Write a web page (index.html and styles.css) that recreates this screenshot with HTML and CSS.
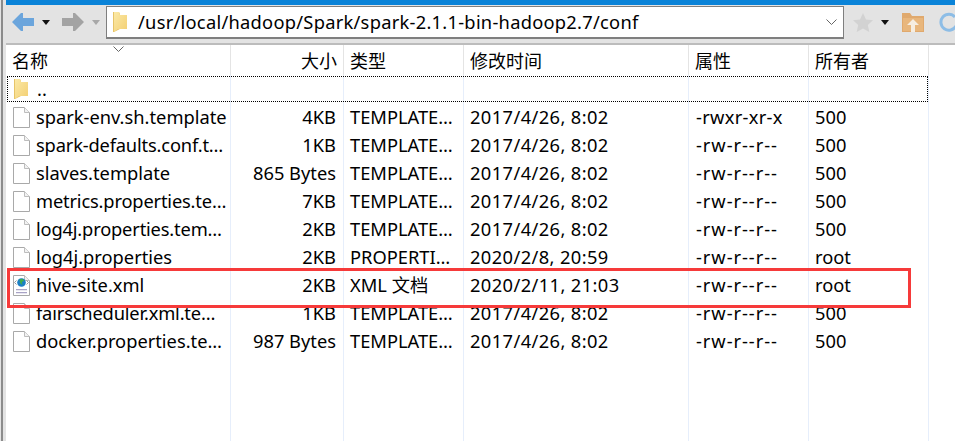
FILE: index.html
```html
<!DOCTYPE html>
<html lang="zh">
<head>
<meta charset="utf-8">
<title>conf</title>
<link rel="stylesheet" href="styles.css">
</head>
<body>
<svg class="defs" width="0" height="0" aria-hidden="true">
  <defs>
    <linearGradient id="fold" x1="0" y1="0" x2="1" y2="1">
      <stop offset="0" stop-color="#fbe9a6"/>
      <stop offset="1" stop-color="#f3cf73"/>
    </linearGradient>
    <symbol id="folder" viewBox="0 0 14 21">
      <path d="M0 1h6l1 2v15l-6 3H0z" fill="#e7c468"/>
      <path d="M1 1h5l1 3h7v14H5l-4 3z" fill="url(#fold)"/>
    </symbol>
    <symbol id="file" viewBox="0 0 17 21">
      <path d="M.5.5h11l5 5v15H.5z" fill="#fff" stroke="#a9a9a9"/>
      <path d="M11.500.5v5h5" fill="#f2f2f2" stroke="#bdbdbd"/>
    </symbol>
    <symbol id="arrow" viewBox="0 0 22 18">
      <path d="M9 0h2v5h11v8H11v5H9L0 9z"/>
    </symbol>
    <symbol id="tri" viewBox="0 0 8 5">
      <path d="M0 0h8L4 5z"/>
    </symbol>
    <symbol id="chev" viewBox="0 0 11 6">
      <path d="M.5.5l5 5 5-5" fill="none" stroke="#666" stroke-width="1"/>
    </symbol>
  </defs>
</svg>
<div class="edge"></div>
<main class="window">
  <div class="accent"></div>
  <div class="toolbar">
    <svg class="ico-arrow back"><use href="#arrow"/></svg>
    <svg class="ico-tri dark"><use href="#tri"/></svg>
    <svg class="ico-arrow forward"><use href="#arrow"/></svg>
    <svg class="ico-tri pale"><use href="#tri"/></svg>
    <div class="address">
      <svg class="ico-folder"><use href="#folder"/></svg>
      <span class="path">/usr/local/hadoop/Spark/spark-2.1.1-bin-hadoop2.7/conf</span>
      <svg class="ico-chev"><use href="#chev"/></svg>
    </div>
    <svg class="star" viewBox="0 0 20 19"><path d="M10 0l3 6.500 7 .8-5.200 4.700 1.500 7L10 15.500 3.700 19l1.500-7L0 7.300l7-.8z" fill="#d2d2d2"/></svg>
    <svg class="ico-tri dark star-tri"><use href="#tri"/></svg>
    <svg class="up" viewBox="0 0 22 19">
      <path d="M0 0h8l2 3h12v16H0z" fill="#e0a96d"/>
      <path d="M1 5h20v13H1z" fill="#e8b67c"/>
      <path d="M11 6l6 6h-4v7H9v-7H5z" fill="#f6ede0"/>
    </svg>
    <svg class="refresh" viewBox="0 0 22 20">
      <path d="M17 5A8 8 0 1 0 18 14" fill="none" stroke="#8dbde6" stroke-width="3"/>
    </svg>
  </div>
  <div class="head">
    <div class="hcell">名称</div>
    <div class="hcell right">大小</div>
    <div class="hcell">类型</div>
    <div class="hcell">修改时间</div>
    <div class="hcell">属性</div>
    <div class="hcell">所有者</div>
    <svg class="sort"><use href="#chev"/></svg>
  </div>
  <div class="list">
    <div class="row focus">
      <div class="cell name"><svg class="ico-folder"><use href="#folder"/></svg><span>..</span></div>
      <div class="cell"></div><div class="cell"></div><div class="cell"></div><div class="cell"></div><div class="cell"></div>
    </div>
    <div class="row">
      <div class="cell name"><svg class="ico-file"><use href="#file"/></svg><span>spark-env.sh.template</span></div>
      <div class="cell size">4KB</div><div class="cell">TEMPLATE…</div><div class="cell date">2017/4/26, 8:02</div><div class="cell perm-x">-rwxr-xr-x</div><div class="cell">500</div>
    </div>
    <div class="row">
      <div class="cell name"><svg class="ico-file"><use href="#file"/></svg><span class="tight">spark-defaults.conf.t…</span></div>
      <div class="cell size">1KB</div><div class="cell">TEMPLATE…</div><div class="cell date">2017/4/26, 8:02</div><div class="cell perm">-rw-r--r--</div><div class="cell">500</div>
    </div>
    <div class="row">
      <div class="cell name"><svg class="ico-file"><use href="#file"/></svg><span>slaves.template</span></div>
      <div class="cell size">865 Bytes</div><div class="cell">TEMPLATE…</div><div class="cell date">2017/4/26, 8:02</div><div class="cell perm">-rw-r--r--</div><div class="cell">500</div>
    </div>
    <div class="row">
      <div class="cell name"><svg class="ico-file"><use href="#file"/></svg><span class="tight">metrics.properties.te…</span></div>
      <div class="cell size">7KB</div><div class="cell">TEMPLATE…</div><div class="cell date">2017/4/26, 8:02</div><div class="cell perm">-rw-r--r--</div><div class="cell">500</div>
    </div>
    <div class="row">
      <div class="cell name"><svg class="ico-file"><use href="#file"/></svg><span class="tight">log4j.properties.tem…</span></div>
      <div class="cell size">2KB</div><div class="cell">TEMPLATE…</div><div class="cell date">2017/4/26, 8:02</div><div class="cell perm">-rw-r--r--</div><div class="cell">500</div>
    </div>
    <div class="row">
      <div class="cell name"><svg class="ico-file"><use href="#file"/></svg><span>log4j.properties</span></div>
      <div class="cell size">2KB</div><div class="cell">PROPERTI…</div><div class="cell date">2020/2/8, 20:59</div><div class="cell perm">-rw-r--r--</div><div class="cell">root</div>
    </div>
    <div class="row">
      <div class="cell name">
        <svg class="ico-file" viewBox="0 0 17 21">
          <path d="M.5.5h11l5 5v15H.5z" fill="#fff" stroke="#a9a9a9"/>
          <path d="M11.500.5v5h5" fill="#f2f2f2" stroke="#bdbdbd"/>
          <circle cx="8.500" cy="7.500" r="4.300" fill="#1c7fc4"/>
          <path d="M6.500 4.500l3-.8 1.500 2.300-2.300 1 .8 3-2.300-1.800z" fill="#3fae49"/>
          <path d="M3.500 5.500L1.500 7.500l2 2M13.500 5.500l2 2-2 2" fill="none" stroke="#9a9a9a"/>
          <path d="M3 14h11v1.200H3zM3 17h11v1.200H3z" fill="#a9a3c6"/>
        </svg>
        <span>hive-site.xml</span>
      </div>
      <div class="cell size">2KB</div><div class="cell">XML 文档</div><div class="cell date">2020/2/11, 21:03</div><div class="cell perm">-rw-r--r--</div><div class="cell">root</div>
    </div>
    <div class="row">
      <div class="cell name"><svg class="ico-file"><use href="#file"/></svg><span class="tight">fairscheduler.xml.te…</span></div>
      <div class="cell size">1KB</div><div class="cell">TEMPLATE…</div><div class="cell date">2017/4/26, 8:02</div><div class="cell perm">-rw-r--r--</div><div class="cell">500</div>
    </div>
    <div class="row">
      <div class="cell name"><svg class="ico-file"><use href="#file"/></svg><span>docker.properties.te…</span></div>
      <div class="cell size">987 Bytes</div><div class="cell">TEMPLATE…</div><div class="cell date">2017/4/26, 8:02</div><div class="cell perm">-rw-r--r--</div><div class="cell">500</div>
    </div>
  </div>
  <div class="callout"></div>
</main>
</body>
</html>
```
FILE: styles.css
```css
* { box-sizing: border-box; }
html, body { margin: 0; height: 100%; }
body {
  display: flex;
  width: 955px;
  height: 441px;
  overflow: hidden;
  background: #e3e3e3;
  font-family: "Noto Sans", "Noto Sans CJK SC", sans-serif;
  font-size: 18.300px;
  color: #000;
}
.defs { position: absolute; }
.edge {
  flex: none;
  width: 2px;
  margin: 0 3px 0 1px;
  background: #8b8b8b;
}
.window {
  position: relative;
  flex: 1;
  min-width: 0;
  display: flex;
  flex-direction: column;
  background: #fff;
}
.accent { flex: none; height: 5px; background: #0a83d8; }
.toolbar {
  flex: none;
  height: 40px;
  display: flex;
  align-items: center;
  overflow: hidden;
  padding: 0 0 4px 6px;
  background: #e3e3e3;
  border-bottom: 2px solid #bcbcbc;
}
.ico-arrow { flex: none; width: 22px; height: 18px; }
.back { fill: #6ba5dc; }
.forward { fill: #a3a3a3; transform: scaleX(-1); margin-left: 12px; }
.ico-tri { flex: none; width: 8px; height: 5px; margin-left: 8px; }
.dark { fill: #111; }
.pale { fill: #a8a8a8; }
.address {
  flex: none;
  width: 738px;
  height: 33px;
  margin-left: 6px;
  display: flex;
  align-items: center;
  padding: 0 6px 0 6px;
  background: #fff;
  border: 1px solid #7f7f7f;
  border-width: 1px 1px 2px;
}
.address .ico-folder { margin-right: 11px; }
.path { flex: 1; white-space: nowrap; letter-spacing: .27px; }
.ico-folder { flex: none; width: 14px; height: 21px; }
.ico-chev { flex: none; width: 11px; height: 6px; }
.star { flex: none; width: 20px; height: 19px; margin-left: 9px; }
.star-tri { margin-left: 8px; }
.up { flex: none; width: 22px; height: 19px; margin-left: 13px; }
.refresh { flex: none; width: 22px; height: 20px; margin-left: 14px; }
.head, .row {
  display: grid;
  grid-template-columns: 225px 113px 120px 225px 120px 120px;
  align-items: center;
  width: 923px;
}
.head { position: relative; flex: none; height: 30px; }
.hcell {
  height: 100%;
  display: flex;
  align-items: center;
  padding: 0 6px;
  border-right: 1px solid #e4e4e4;
  white-space: nowrap;
  font-size: 18px;
}
.right { justify-content: flex-end; }
.sort { position: absolute; left: 107px; top: 1px; width: 11px; height: 6px; }
.list {
  flex: 1;
  background-image:
    linear-gradient(#e6eefb, #e6eefb), linear-gradient(#e6eefb, #e6eefb),
    linear-gradient(#e6eefb, #e6eefb), linear-gradient(#e6eefb, #e6eefb),
    linear-gradient(#e6eefb, #e6eefb), linear-gradient(#e6eefb, #e6eefb);
  background-repeat: no-repeat;
  background-size: 1px 100%;
  background-position: 224px 0, 337px 0, 457px 0, 682px 0, 802px 0, 922px 0;
}
.row { height: 28px; }
.focus { outline: 1px dotted #000; outline-offset: -2px; }
.cell {
  display: flex;
  align-items: center;
  height: 100%;
  padding: 0 6px 2px;
  white-space: nowrap;
  overflow: hidden;
}
.name { padding-left: 7px; }
.name .ico-folder { margin-right: 9px; margin-left: 1px; }
.ico-file { flex: none; width: 17px; height: 21px; margin-right: 6px; position: relative; top: 1px; }
.tight { letter-spacing: -.17px; }
.size { justify-content: flex-end; padding-right: 8px; }
.date { letter-spacing: .4px; }
.perm { letter-spacing: .95px; padding-left: 7px; }
.perm-x { letter-spacing: .3px; padding-left: 7px; }
.callout {
  position: absolute;
  left: 1px;
  top: 268px;
  width: 904px;
  height: 40px;
  border: 3px solid #f63a3a;
}
```
